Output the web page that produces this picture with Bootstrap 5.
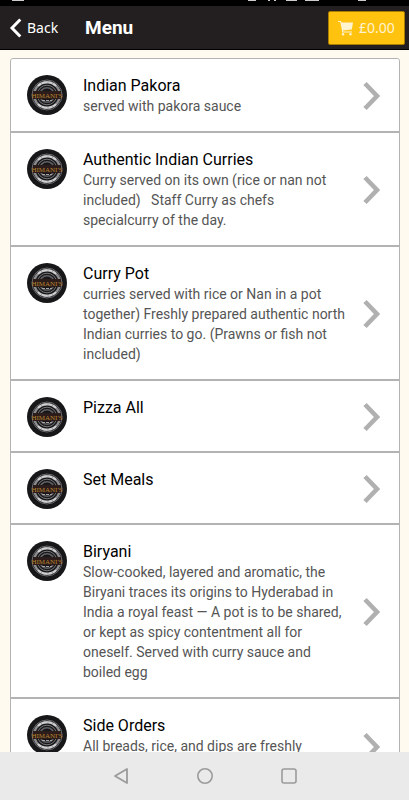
<!DOCTYPE html>
<html lang="en">
<head>
<meta charset="utf-8">
<meta name="viewport" content="width=device-width, initial-scale=1">
<title>Menu</title>
<link href="https://cdn.jsdelivr.net/npm/bootstrap@5.3.0/dist/css/bootstrap.min.css" rel="stylesheet">
<style>
body { font-family: Roboto, "Liberation Sans", sans-serif; background: #fffaf0; }
.status-strip { height: 6px; background: #000; }
.status-strip svg { display: block; width: 100%; height: 6px; }
.app-bar { height: 44px; background: #231f20; border-bottom: 1px solid #000; padding: 0 4px 0 9px; }
.back-link { font: 14px/20px "Noto Sans", sans-serif; width: 76px; gap: 5px; }
.page-title { font-size: 19px; line-height: 24px; }
.basket { font: 14px/20px "Noto Sans", sans-serif; width: 77px; height: 34px; gap: 6px; background: #ffc20e; color: #fff3d0; border: 1px solid #a87d00; border-radius: 2px; padding: 0; }
.menu-list { margin: 8px 9px 0 10px; border: 1px solid #b3b3b3; border-radius: 3px; background: #fff; }
.menu-list .menu-row { padding: 16px 18px 14px 16px; border: 0 solid #b3b3b3; border-bottom-width: 2px; gap: 16px; }
.menu-list .menu-row:last-child { min-height: 94px; }
.dish-title { font-size: 16px; font-weight: 400; line-height: 21px; color: #000; margin: 0; }
.dish-text { font-size: 14px; line-height: 20px; color: #555; margin: 0 0 1px; }
.system-bar { height: 48px; background: #eaeaea; gap: 64px; }
.system-bar button { width: 20px; height: 20px; }
</style>
<script src="https://cdn.jsdelivr.net/npm/bootstrap@5.3.0/dist/js/bootstrap.bundle.min.js"></script>
</head>
<body class="d-flex flex-column vh-100 overflow-hidden">
<svg class="d-none" aria-hidden="true">
  <symbol id="logo" viewBox="0 0 40 40">
    <circle cx="20" cy="20" r="20" fill="#171719"/>
    <circle cx="20" cy="20" r="15" fill="none" stroke="#6c6c70" stroke-width="1"/>
    <circle cx="20" cy="20" r="12.8" fill="none" stroke="#8d8d90" stroke-width="2.4"/>
    <path d="M11 10.900A12.800 12.800 0 0 1 29 10.900M11 29.100A12.800 12.800 0 0 0 29 29.100" fill="none" stroke="#d0d0d2" stroke-width="2" stroke-dasharray="4 .6 6 .6"/>
    <circle cx="20" cy="20" r="9.800" fill="none" stroke="#77777a" stroke-width="1"/>
    <circle cx="20" cy="20" r="7.300" fill="none" stroke="#5f5f64" stroke-width="1.600"/>
    <path d="M6 16h28v8H6z" fill="#2c1c1a"/>
    <path d="M15 25.500h10" stroke="#a5a3a5" stroke-width="1.200" stroke-dasharray="3 1"/>
    <text x="20" y="22.500" text-anchor="middle" font-family="Liberation Serif, serif" font-weight="400" font-size="7" fill="#b5832f">HIMANI'S</text>
  </symbol>
  <symbol id="chevron" viewBox="0 0 18 30"><path d="M2 2.500 14 15 2 27.500" fill="none" stroke="#b0b0b0" stroke-width="4.600"/></symbol>
</svg>
<div class="status-strip flex-shrink-0" aria-hidden="true">
  <svg viewBox="0 0 409 6" preserveAspectRatio="none"><path d="M12 0h12v1H12zM248 0h8v1h-8zM268 0h2v1h-2zM274 0h2v1h-2zM286 0h11v1h-11zM305 0h14v1h-14zM358 0h8v1h-8z" fill="#ccc"/></svg>
</div>
<header class="app-bar d-flex align-items-center flex-shrink-0">
  <a href="#" class="back-link d-flex align-items-center text-white text-decoration-none">
    <svg width="13" height="20" viewBox="0 0 13 20" aria-hidden="true"><path d="M11.300 1.500 3 10l8.300 8.500" fill="none" stroke="#fff" stroke-width="3"/></svg>Back</a>
  <h1 class="page-title fw-bold text-white mb-0">Menu</h1>
  <button type="button" class="btn basket ms-auto d-flex align-items-center justify-content-center">
    <svg width="15" height="16" viewBox="0 0 15 16" aria-hidden="true"><path d="M0 1h3l.6 1.600H15l-1.200 6.800-8.800 1.100v1h9v1H4v-2L2.200 2H0z" fill="#fff3d0"/><circle cx="5" cy="14.200" r="1.200" fill="#fff3d0"/><circle cx="12.500" cy="14.200" r="1.200" fill="#fff3d0"/></svg>£0.00</button>
</header>
<main class="flex-grow-1 overflow-hidden">
  <nav class="menu-list list-group list-group-flush" aria-label="Menu sections">
    <a href="#" class="menu-row list-group-item d-flex align-items-start">
      <svg class="flex-shrink-0" width="40" height="40" aria-hidden="true"><use href="#logo"/></svg>
      <div class="flex-grow-1"><h2 class="dish-title">Indian Pakora</h2><p class="dish-text">served with pakora sauce</p></div>
      <svg class="flex-shrink-0 align-self-center" width="18" height="30" aria-hidden="true"><use href="#chevron"/></svg>
    </a>
    <a href="#" class="menu-row list-group-item d-flex align-items-start">
      <svg class="flex-shrink-0" width="40" height="40" aria-hidden="true"><use href="#logo"/></svg>
      <div class="flex-grow-1"><h2 class="dish-title">Authentic Indian Curries</h2><p class="dish-text">Curry served on its own (rice or nan not included) &nbsp; Staff Curry as chefs specialcurry of the day.</p></div>
      <svg class="flex-shrink-0 align-self-center" width="18" height="30" aria-hidden="true"><use href="#chevron"/></svg>
    </a>
    <a href="#" class="menu-row list-group-item d-flex align-items-start">
      <svg class="flex-shrink-0" width="40" height="40" aria-hidden="true"><use href="#logo"/></svg>
      <div class="flex-grow-1"><h2 class="dish-title">Curry Pot</h2><p class="dish-text">curries served with rice or Nan in a pot together) Freshly prepared authentic north Indian curries to go. (Prawns or fish not included)</p></div>
      <svg class="flex-shrink-0 align-self-center" width="18" height="30" aria-hidden="true"><use href="#chevron"/></svg>
    </a>
    <a href="#" class="menu-row list-group-item d-flex align-items-start">
      <svg class="flex-shrink-0" width="40" height="40" aria-hidden="true"><use href="#logo"/></svg>
      <div class="flex-grow-1"><h2 class="dish-title">Pizza All</h2></div>
      <svg class="flex-shrink-0 align-self-center" width="18" height="30" aria-hidden="true"><use href="#chevron"/></svg>
    </a>
    <a href="#" class="menu-row list-group-item d-flex align-items-start">
      <svg class="flex-shrink-0" width="40" height="40" aria-hidden="true"><use href="#logo"/></svg>
      <div class="flex-grow-1"><h2 class="dish-title">Set Meals</h2></div>
      <svg class="flex-shrink-0 align-self-center" width="18" height="30" aria-hidden="true"><use href="#chevron"/></svg>
    </a>
    <a href="#" class="menu-row list-group-item d-flex align-items-start">
      <svg class="flex-shrink-0" width="40" height="40" aria-hidden="true"><use href="#logo"/></svg>
      <div class="flex-grow-1"><h2 class="dish-title">Biryani</h2><p class="dish-text">Slow-cooked, layered and aromatic, the Biryani traces its origins to Hyderabad in India a royal feast — A pot is to be shared, or kept as spicy contentment all for oneself. Served with curry sauce and boiled egg</p></div>
      <svg class="flex-shrink-0 align-self-center" width="18" height="30" aria-hidden="true"><use href="#chevron"/></svg>
    </a>
    <a href="#" class="menu-row list-group-item d-flex align-items-start">
      <svg class="flex-shrink-0" width="40" height="40" aria-hidden="true"><use href="#logo"/></svg>
      <div class="flex-grow-1"><h2 class="dish-title">Side Orders</h2><p class="dish-text">All breads, rice, and dips are freshly</p></div>
      <svg class="flex-shrink-0 align-self-center" width="18" height="30" aria-hidden="true"><use href="#chevron"/></svg>
    </a>
  </nav>
</main>
<footer class="system-bar d-flex justify-content-center align-items-center flex-shrink-0">
  <button type="button" class="btn p-0 border-0 d-flex" aria-label="Back"><svg width="20" height="20" viewBox="0 0 20 20"><path d="M16 3v14L4 10z" fill="none" stroke="#9b9b9b" stroke-width="1.800" stroke-linejoin="round"/></svg></button>
  <button type="button" class="btn p-0 border-0 d-flex" aria-label="Home"><svg width="20" height="20" viewBox="0 0 20 20"><circle cx="10" cy="10" r="7.200" fill="none" stroke="#9b9b9b" stroke-width="1.600"/></svg></button>
  <button type="button" class="btn p-0 border-0 d-flex" aria-label="Recent apps"><svg width="20" height="20" viewBox="0 0 20 20"><rect x="3" y="3" width="14" height="14" rx="2" fill="none" stroke="#9b9b9b" stroke-width="1.600"/></svg></button>
</footer>
</body>
</html>
